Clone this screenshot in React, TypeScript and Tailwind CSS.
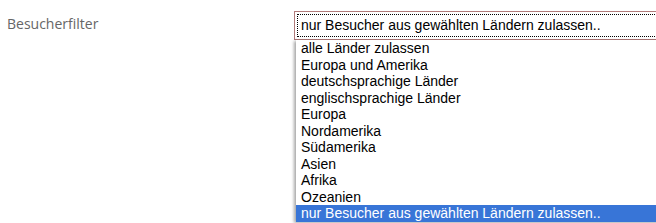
import React from "react";

const options = [
  "alle Länder zulassen",
  "Europa und Amerika",
  "deutschsprachige Länder",
  "englischsprachige Länder",
  "Europa",
  "Nordamerika",
  "Südamerika",
  "Asien",
  "Afrika",
  "Ozeanien",
  "nur Besucher aus gewählten Ländern zulassen..",
];

export default function App() {
  const selected = options.length - 1;

  return (
    <div className="w-[656px] h-[223px] bg-white overflow-hidden flex">
      <div className="w-[294px] shrink-0 pl-[7px] pt-[13px] text-[14px] text-[#666] font-['Open_Sans',sans-serif]">
        Besucherfilter
      </div>

      <div className="relative flex-1 min-w-0 pt-[11px]">
        <div className="h-[29px] w-[400px] border border-[#b07a7a] p-[2px] bg-white">
          <div className="h-full border border-dotted border-black flex items-center pl-[3px] text-[14px] text-black font-['Liberation_Sans',Arial,sans-serif]">
            {options[selected]}
          </div>
        </div>

        <ul className="absolute left-[2px] top-[40px] w-[400px] bg-white shadow-[-2px_1px_3px_rgba(0,0,0,0.35)] text-[14px] font-['Liberation_Sans',Arial,sans-serif] text-black">
          {options.map((o, i) => (
            <li
              key={o}
              className={`h-[16.55px] leading-[16.55px] pl-[5px] whitespace-nowrap ${
                i === selected ? "bg-[#3875d7] text-white" : ""
              }`}
            >
              {o}
            </li>
          ))}
        </ul>
      </div>
    </div>
  );
}
